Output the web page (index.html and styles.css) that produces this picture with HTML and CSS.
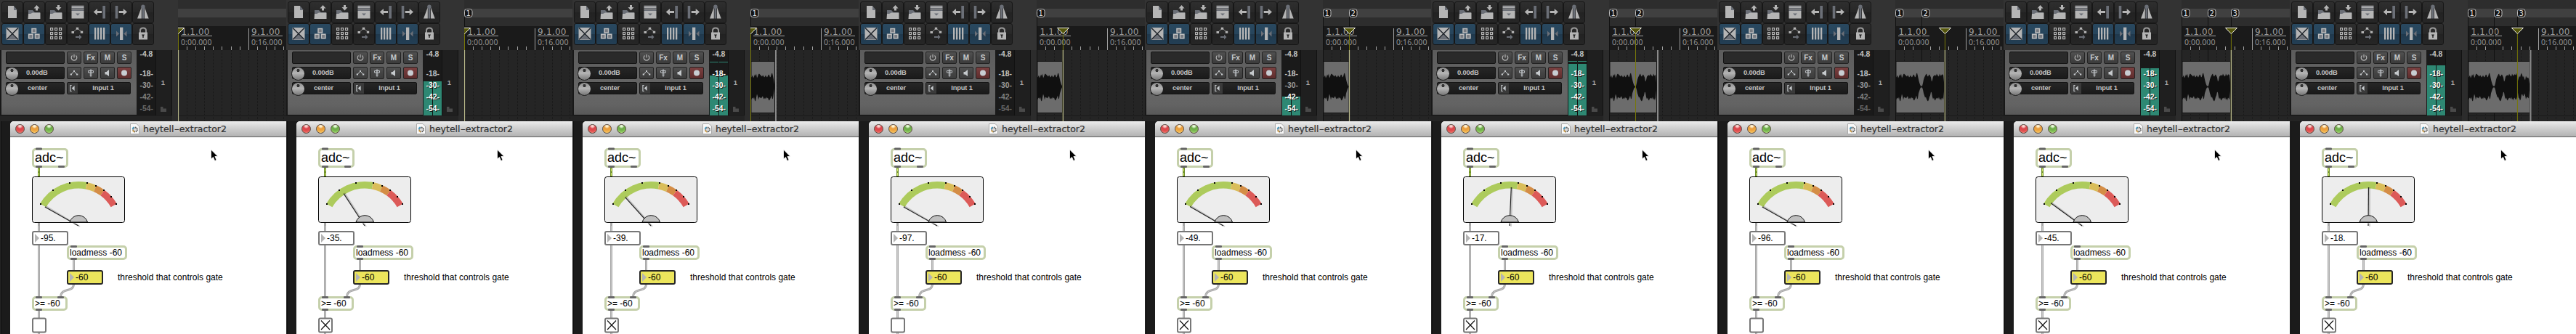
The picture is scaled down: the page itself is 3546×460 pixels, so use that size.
FILE: index.html
```html
<!DOCTYPE html>
<html lang="en">
<head>
<meta charset="utf-8">
<title>heytell-extractor2</title>
<link rel="stylesheet" href="styles.css">
</head>
<body>
<svg class="sprites" aria-hidden="true">
  <symbol id="i-new" viewBox="0 0 30 30"><path class="lt" d="M9 6h8v6h4v11H9z"/><path class="dk" d="M17 6l4.500 5.500V12H17z"/></symbol>
  <symbol id="i-open" viewBox="0 0 30 30"><path class="dk" d="M7 12h6l3 3h7v2H7z"/><path class="lt" d="M7 17h3l3-1.500h10.500V24H6.500z"/><path class="lt" d="M18.500 5l4 4.500h-2.500v3h-3v-3h-2.500z"/></symbol>
  <symbol id="i-save" viewBox="0 0 30 30"><path class="dk" d="M7 12h6l3 3h7v2H7z"/><path class="lt" d="M7 17h3l3-1.500h10.500V24H6.500z"/><path class="lt" d="M18.500 12.500l4-4.500h-2.500V5h-3v3h-2.500z"/></symbol>
  <symbol id="i-list" viewBox="0 0 30 30"><path class="lt" d="M6.500 5.700h17v1.300h-17zM6.500 8h17v1.300h-17zM6.500 10.300h17v1.300h-17zM6.500 13h17v10.500h-17z"/><path class="dk" d="M6.500 7h17v1h-17zM6.500 9.300h17v1h-17zM6.500 11.600h17v1.400h-17zM12 16.500h6l-3 3z"/></symbol>
  <symbol id="i-undo" viewBox="0 0 30 30"><path class="lt" d="M6.700 14.500l5.300-4.500v3h6v3h-6v3z"/><path class="dk" d="M19.300 6H23v17.500h-3.700z"/></symbol>
  <symbol id="i-redo" viewBox="0 0 30 30"><path class="lt" d="M23 14.500L17.700 10v3h-6v3h6v3z"/><path class="dk" d="M6.700 6h3.600v17.500H6.700z"/></symbol>
  <symbol id="i-metro" viewBox="0 0 30 30"><path class="lt" d="M12.800 8v15.500H7zM17 8v15.500h5.700z"/><path class="dk" d="M13.500 9h2.800v14.500h-2.800z"/><circle class="dk" cx="14.900" cy="7.300" r="2.700"/></symbol>
  <symbol id="i-xfade" viewBox="0 0 30 30"><path class="lt" d="M6.500 6h17v17h-17z"/><path class="dk" d="M8 22.500h14l-7-7z"/><path d="M7 6.500l16 16M23 6.500l-16 16" stroke="#20262c" stroke-width="1.500"/></symbol>
  <symbol id="i-group" viewBox="0 0 30 30"><g fill="#777b82" stroke="#bdbdbd" stroke-width="1.500"><path d="M12 7.400h5.500v5.500H12zM7.600 15.200h5.500v5.500H7.600zM16.400 15.200h5.500v5.500h-5.500z"/></g></symbol>
  <symbol id="i-grid" viewBox="0 0 30 30"><g fill="none" stroke="#b5b5b5" stroke-width="1.200"><path d="M7.600 6.600h3v3h-3zM13.600 6.600h3v3h-3zM19.600 6.600h3v3h-3zM7.600 12.600h3v3h-3zM13.600 12.600h3v3h-3zM19.600 12.600h3v3h-3zM7.600 18.600h3v3h-3zM13.600 18.600h3v3h-3zM19.600 18.600h3v3h-3z"/></g></symbol>
  <symbol id="i-env" viewBox="0 0 30 30"><path d="M8.500 12.500l6-5.500 6 5" fill="none" stroke="#888" stroke-width="1"/><path class="lt" d="M6.500 11h3.500v3H6.500zM12.800 5.700h3.400v3h-3.400zM18.800 10.700h3.400v3h-3.400z"/><path class="dk" d="M12 18h5v-2.500l3.500 3.500-3.500 3.500V20h-5z"/></symbol>
  <symbol id="i-bars" viewBox="0 0 30 30"><path class="lt" d="M8 6h2.300v16.500H8zM12 6h2.300v16.500H12zM16 6h2.300v16.500H16zM20 6h2.300v16.500H20z"/></symbol>
  <symbol id="i-snap" viewBox="0 0 30 30"><path class="lt" d="M13 5.700h4.300v17.300H13z"/><path class="dk" d="M8 10.500l4 4-4 4zM22.500 10.500l-4 4 4 4z"/></symbol>
  <symbol id="i-lock" viewBox="0 0 30 30"><path d="M11 13V10q0-3.500 4-3.500t4 3.500v3" fill="none" stroke="#999" stroke-width="2"/><path class="lt" d="M9 12.500h12V22.500H9z"/><path d="M13 15.500h4l-1.300 2.500v2h-1.400v-2z" fill="#222"/></symbol>
  <symbol id="c-power" viewBox="0 0 20 17"><path d="M7.500 5.500a3.800 3.800 0 1 0 5 0M10 4v4.500" fill="none" stroke="#b4b4b4" stroke-width="1.200"/></symbol>
  <symbol id="c-env" viewBox="0 0 20 17"><path d="M6 10.500L10 6l4 4.500" fill="none" stroke="#c5c9cc"/><path d="M4.700 9.500h2.300v2H4.700zM9 5h2v2H9zM13 9.500h2.300v2H13z" fill="#c5c9cc"/></symbol>
  <symbol id="c-pin" viewBox="0 0 20 17"><path d="M6.500 5.500h7v2.500h-7zM9.300 4h1.500v9H9.300z" fill="none" stroke="#b8bcc0" stroke-width="1"/></symbol>
  <symbol id="c-spk" viewBox="0 0 20 17"><path d="M6.500 7H8.500L12 4v9L8.500 10.500H6.500z" fill="#c5c9cc"/></symbol>
  <symbol id="c-rec" viewBox="0 0 20 17"><circle cx="10" cy="8.500" r="4" fill="#c8cdd2"/></symbol>
  <symbol id="c-in" viewBox="0 0 15 17"><path d="M6 4H4v9h2" fill="none" stroke="#c5c9cc" stroke-width="1.300"/><path d="M6 8.500l4.500-4v8z" fill="#c5c9cc"/></symbol>
</svg>

<main class="strip"></main>

<template id="frame">
  <section class="frame">
    <div class="daw">
      <div class="left">
        <div class="toolbar"></div>
        <div class="track">
          <div class="controls">
            <div class="row"><span class="field name"></span><span class="btn"><svg><use href="#c-power"/></svg></span><span class="btn">Fx</span><span class="btn">M</span><span class="btn">S</span></div>
            <div class="row"><span class="field dial"><i></i>0.00dB</span><span class="btn"><svg><use href="#c-env"/></svg></span><span class="btn"><svg><use href="#c-pin"/></svg></span><span class="btn"><svg><use href="#c-spk"/></svg></span><span class="btn rec"><svg><use href="#c-rec"/></svg></span></div>
            <div class="row"><span class="field dial"><i></i>center</span><span class="input"><svg><use href="#c-in"/></svg><b>Input 1</b></span></div>
          </div>
          <div class="vu"></div>
          <div class="number"><span>1</span><svg viewBox="0 0 8 8"><path d="M0 0h3.500v2.500H8V7H0z" fill="#4a4a4a"/></svg></div>
        </div>
      </div>
      <svg class="timeline" viewBox="245 0 149 167"></svg>
    </div>
    <div class="window">
      <header class="titlebar">
        <span class="lights"><i class="red"></i><i class="amber"></i><i class="green"></i></span>
        <svg class="doc" viewBox="0 0 13 15"><path d="M.5.500h8.500l3.500 3.500v10.500H.5z" fill="#f8f8f8" stroke="#aaa"/><circle cx="7" cy="8.500" r="3" fill="#ddd" stroke="#555" stroke-width="1.800" stroke-dasharray="1.500 .8"/><path d="M3.500 8a3.500 3.500 0 0 1 2-3" fill="none" stroke="#4aa0c8" stroke-width="1.600"/><path d="M3.800 9.500l2 2.500" stroke="#d9a03c" stroke-width="1.500"/></svg>
        <h1>heytell<span class="dash">-</span>extractor2</h1>
      </header>
      <div class="patch">
        <svg class="cords" viewBox="14 189 380 271"></svg>
        <div class="node object adc">adc~</div>
        <div class="node number-box reading"><span></span></div>
        <div class="node object loadmess">loadmess -60</div>
        <div class="node number-box threshold"><span>-60</span></div>
        <div class="node comment">threshold that controls gate</div>
        <div class="node object compare">&gt;= -60</div>
        <svg class="ports" viewBox="14 189 380 271"></svg>
      </div>
    </div>
  </section>
</template>
<script src="app.js"></script>
</body>
</html>
```

FILE: styles.css
```css
* { box-sizing: border-box; }
html { overflow: hidden; background: #1b1b1b; }
body { margin: 0; height: 460px; overflow: hidden; }
svg { display: block; }
.sprites { position: absolute; width: 0; height: 0; }
.lt { fill: #b5b5b5; }
.dk { fill: #6b6f77; }

.strip { display: flex; width: 3546px; height: 460px; }
.frame {
  flex: 0 0 394px; height: 460px; overflow: hidden;
  background: linear-gradient(90deg, #252525 0 1px, #101010 1px 2px, #1b1b1b 2px);
  font-family: "Liberation Sans", Arial, sans-serif;
}
.daw { display: flex; height: 167px; background: #222; }
.left { width: 245px; background: #333; }

.toolbar {
  height: 69px; padding: 2px 0 0 2px;
  display: grid; grid-template-columns: repeat(7, 30px); grid-auto-rows: 30px;
  align-content: start;
}
.tool {
  border: 1px solid #171717; border-radius: 3px;
  background: linear-gradient(#2e2e2e, #272727 50%, #222 50%, #262626);
}
.tool.on { background: linear-gradient(#29485f, #27455c 50%, #20394d 50%, #233f55); }
.tool svg { width: 30px; height: 30px; margin: -1px; }

.track { display: flex; height: 98px; padding-left: 1px; background: linear-gradient(90deg, transparent 237px, #2c2c2c 237px), linear-gradient(#181818 90px, #242424 91px); }
.controls {
  width: 187px; height: 90px; padding: 2px 0 0 6px;
  display: flex; flex-direction: column; gap: 4px;
  border-left: 1px solid #181818; border-bottom: 1px solid #181818;
  background: linear-gradient(#5c5c5c, #666 60%, #636363 85%, #585858);
}
.row { display: flex; gap: 3px; height: 17px; }
.field {
  width: 81px; border: 1px solid #141414; border-radius: 2px;
  background: linear-gradient(#262626, #1a1a1a);
  color: #c2c2c2; font-weight: bold; font-size: 9.300px; line-height: 14px;
}
.field.name { background: #2a2a2a; }
.field.dial { display: flex; padding-left: 27px; position: relative; letter-spacing: -.15px; }
.field.dial:has(+ .input) { padding-left: 29px; }
.dial i {
  position: absolute; left: -2px; top: -1px; width: 19px; height: 19px; border-radius: 50%;
  border: 1px solid #202020;
  background: radial-gradient(circle at 8.500px 4px, #333 0 1.800px, transparent 2.300px), linear-gradient(#8c8c8c, #b5b5b5 45%, #777);
}
.btn {
  width: 20px; border: 1px solid #222; border-radius: 2px;
  background: linear-gradient(#515151, #444 50%, #3c3c3c);
  color: #c6cacd; font-weight: bold; font-size: 10px; line-height: 15px; text-align: center;
}
.btn svg { width: 20px; height: 17px; margin: -1px; }
.btn.rec { background: linear-gradient(#7a4040, #6a3434 60%, #5c2c2c); }
.input { display: flex; width: 88px; border: 1px solid #141414; border-radius: 2px; background: linear-gradient(#262626, #1a1a1a); }
.input svg { width: 14px; height: 15px; background: #3a3a3a; }
.input b { flex: 1; color: #c2c2c2; font-size: 9.300px; line-height: 14px; letter-spacing: -.15px; text-align: center; padding-right: 2px; }

.vu {
  position: relative; width: 27px; height: 90px; background: #1a1a1a; overflow: hidden;
  border-right: 1px solid #111;
}
.vu .level { position: absolute; left: 1px; width: 25px; background: linear-gradient(90deg, #2e8873 12px, #111 12px 13px, #2e8873 13px); }
.vu b { position: absolute; left: 4.500px; color: #c4c4c4; font-size: 10.300px; line-height: 10px; }
.vu b.lit { color: #fff; text-shadow: 1px 1px #111; }
.number {
  width: 22px; height: 90px; background: #1f1f1f; color: #a8a8a8;
  font-size: 9.500px; line-height: 11px; font-weight: bold; border-right: 1px solid #121212;
  display: flex; flex-direction: column; justify-content: flex-end; align-items: center; gap: 28px; padding: 0 2px 4px 0;
}
.number svg { width: 8px; height: 8px; }

.timeline { width: 149px; height: 167px; }
.timeline .bar { font: 12px "DejaVu Sans", sans-serif; fill: #9a9a9a; }
.timeline .time { font: 10.500px "Noto Sans", sans-serif; fill: #909090; }
.timeline .mark { font: 10px "DejaVu Sans", sans-serif; fill: #e0e0e0; text-anchor: middle; }

.window { position: relative; margin-left: 14px; height: 293px; background: #fff; border-radius: 5px 0 0 0; }
.titlebar {
  height: 22px; display: flex; align-items: center; padding-left: 7px;
  background: linear-gradient(#ececec, #d2d2d2 40%, #b2b2b2); border-bottom: 1px solid #5f5f5f; border-radius: 5px 0 0 0;
}
.lights { display: flex; gap: 7px; width: 158px; }
.lights i { width: 13px; height: 13px; border-radius: 50%; border: 1px solid #5a4a40; }
.red { background: radial-gradient(circle at 50% 12%, #fbd0cc 0 1.500px, #d8434a 4px, #e2504f 65%, #f59a8c); }
.amber { background: radial-gradient(circle at 50% 12%, #fff0cc 0 1.500px, #e89a3a 4px, #f0ac45 65%, #fde08a); }
.green { background: radial-gradient(circle at 50% 12%, #e2f7d2 0 1.500px, #69a845 4px, #7cbb52 65%, #c2ee92); }
.doc { width: 13px; height: 15px; margin-right: 5px; }
.titlebar h1 { margin: 0; font: 12.500px "DejaVu Sans", sans-serif; color: #333; -webkit-text-stroke: .2px #333; white-space: nowrap; }
.dash { display: inline-block; transform: scaleX(1.6); margin: 0 1.400px; }

.patch { position: relative; height: 271px; overflow: hidden; }
.cords, .ports { position: absolute; left: 0; top: 0; width: 380px; height: 271px; }
.node { position: absolute; font-size: 12px; color: #000; white-space: nowrap; }
.object { border: 3px solid #c5d0ab; border-radius: 5px; background: #fff; line-height: 14px; padding-left: 1px; height: 20px; }
.adc { left: 30px; top: 15px; width: 50px; height: 27px; font-size: 18px; line-height: 20px; }
.loadmess { left: 78px; top: 149px; width: 83px; }
.compare { left: 30px; top: 219px; width: 49px; }
.number-box { width: 50px; height: 20px; border: 2px solid #777; border-radius: 3px; background: #fff; line-height: 16px; display: flex; align-items: center; gap: 2px; padding-left: 2px; }
.number-box::before { content: ""; border: solid transparent; border-width: 6px 0 6px 6px; border-left-color: #b4b4b4; }
.reading { left: 30px; top: 129px; }
.threshold { left: 78px; top: 183px; background: #ece55c; border-color: #262626; }
.comment { left: 148px; top: 186px; line-height: 14px; }
```

FILE: app.js
```js
const TOOLS = ['new', 'open', 'save', 'list', 'undo', 'redo', 'metro',
  'xfade', 'group', 'grid', 'env', 'bars', 'snap', 'lock'];
const ACTIVE = new Set(['xfade', 'group', 'bars', 'snap']);

// level/peak: y of the input meter; clip: right end of the recorded item;
// play: play cursor x; edge: end of the item being recorded; angle: needle.
const FRAMES = [
  { db: '-95.', angle: -60.5, play: 245.5, markers: [], pale: true },
  { db: '-35.', angle: -33, play: 245.5, level: 112, markers: [245.5], pale: true, on: true },
  { db: '-39.', angle: -42, play: 245.5, level: 104, peak: 85, clip: 278.5, edge: 280, markers: [245.5], on: true },
  { db: '-97.', angle: -60.5, play: 281.4, clip: 280.5, markers: [245.5], pale: true },
  { db: '-49.', angle: -60, play: 281.5, level: 133, clip: 281, markers: [245.5, 281.5], pale: true, on: true },
  { db: '-17.', angle: 2.5, play: 281.5, level: 88, peak: 84, clip: 310.5, edge: 312, markers: [245.5, 281.5], on: true },
  { db: '-96.', angle: -60.5, play: 313.4, clip: 312.6, markers: [245.5, 281.5], pale: true },
  { db: '-45.', angle: -54, play: 313.4, level: 94, clip: 312.6, markers: [245.5, 281.5, 313.5], pale: true, on: true },
  { db: '-18.', angle: .5, play: 313.4, level: 90, clip: 330.5, edge: 331.5, markers: [245.5, 281.5, 313.5], on: true },
];

const UP = [13,14,16,12,14,17,15,18,12,14,17,18,17,16,15,14,16,15,13,14,16,14,13,15,17,16,13,14,18,19,15,10,6,3,1,1,1,5,10,13,15,17,18,15,14,16,17,15,13,7,9,14,15,16,16,15,18,16,15,14,18,16,15,17,17,16,19,15,8,12,15,13,17,19,16,13,15,11,9,15,13,12,13,11,11];
const DOWN = [18,16,15,17,14,19,20,15,10,13,18,14,15,15,16,14,13,16,17,15,17,14,16,15,18,19,17,15,12,17,16,9,6,3,1,1,1,4,9,12,15,14,17,19,20,18,14,12,7,8,14,17,15,18,19,16,16,15,17,14,18,16,19,15,16,18,17,14,8,15,16,19,17,11,10,13,12,9,12,17,15,14,15,16,13];

function waveform(end) {
  const n = Math.floor(end - 246);
  let d = 'M246 119';
  for (let i = 0; i < n; i++) d += `L${246 + i} ${119.5 - UP[i]}`;
  d += `L${end} 119`;
  for (let i = n - 1; i >= 0; i--) d += `L${246 + i} ${119.5 + DOWN[i]}`;
  return d + 'Z';
}

function timeline(f) {
  const ticks = [257.5, 269.5, 281.5, 293.5, 305.5, 318.5, 330.5, 354.5, 366.5, 378.5, 390.5];
  let s = `<path d="M245 0h149v167H245z" fill="#252525"/>
    <path d="M245 0h149v36H245z" fill="#2d2d2d"/><path d="M245 12h149v12H245z" fill="#404040"/>
    <path d="M245 36h149v33H245z" fill="#1a1a1a"/>`;
  for (const x of [...ticks, 342.5]) s += `<path d="M${x} 69V167" stroke="#171717" stroke-dasharray="1 1"/>`;
  s += '<path d="M245 159.5h149" stroke="#1b1b1b"/>';
  for (const x of ticks) s += `<path d="M${x} 64v5" stroke="#a0a0a0"/>`;
  s += `<path d="M342.5 39v30M249 49.5h43M346 49.500h43" stroke="#a0a0a0"/>
    <text class="bar" x="249.5" y="48" textLength="39">1.1.00</text>
    <text class="bar" x="346" y="48" textLength="39.5">9.1.00</text>
    <text class="time" x="249" y="62" textLength="42.5">0:00.000</text>
    <text class="time" x="346" y="62" textLength="42.5">0:16.000</text>`;
  for (const x of f.markers) s += `<path d="M${x} 23V167" stroke="#111"/>`;
  if (f.clip) {
    s += `<path d="M246 84.500H${f.clip}V155.500H246z" fill="#6c6c6c" stroke="#141414"/>
      <path d="${waveform(f.clip)}" fill="#101010"/>`;
  }
  f.markers.forEach((x, i) => {
    s += `<rect x="${x}" y="12.500" width="10.500" height="11" rx="3" fill="#141414" stroke="#bdbdbd"/>
      <text class="mark" x="${x + 5.2}" y="21.500">${i + 1}</text>`;
  });
  if (f.edge) s += `<path d="M${f.edge} 69V167" stroke="#8a8a8a" stroke-width="2"/>`;
  s += `<path d="M${f.play} 40V167" stroke="#78780a"/>`;
  if (f.pale) s += `<path d="M${f.play} 69V167" stroke="#b9b98a" stroke-width="1.200"/>`;
  s += `<path d="M${f.play - 8} 38.500h16l-8 8z" fill="#55560c" stroke="#f2f2e6"/>`;
  return s;
}

function levelMeter(f) {
  const labels = [['-4.8', 75], ['-18-', 101.5], ['-30-', 118], ['-42-', 134], ['-54-', 150]];
  let s = f.level ? `<i class="level" style="top:${f.level - 69}px;height:${159 - f.level}px"></i>` : '';
  if (f.peak) s += `<i class="level" style="top:${f.peak - 69}px;height:1px"></i>`;
  const dim = [1, 1, .75, .6, .45];
  labels.forEach(([t, y], i) => {
    const lit = f.level && y + 3 > f.level;
    s += `<b class="${lit ? 'lit' : ''}" style="top:${y - 74}px;opacity:${lit ? 1 : dim[i]}">${t}</b>`;
  });
  return s;
}

const polar = (r, deg) => {
  const a = deg * Math.PI / 180;
  return `${(108 + r * Math.sin(a)).toFixed(2)} ${(311 - r * Math.cos(a)).toFixed(2)}`;
};
const band = (a, b, fill) =>
  `<path d="M${polar(61, a)}A61 61 0 0 1 ${polar(61, b)}L${polar(51.5, b)}A51.500 51.500 0 0 0 ${polar(51.5, a)}Z" fill="${fill}"/>`;

function cords(f) {
  let s = `<g fill="none" stroke="#a8a8a8" stroke-width="3">
      <path d="M53.500 306V440M53.500 457v4M101.500 357V374M101.500 391C101.500 404 84 395 83.500 409"/></g>
    <path d="M53.500 306V440M53.500 457v4M101.500 357V374M101.500 391C101.500 404 84 395 83.500 409" fill="none" stroke="#c8c8c8"/>
    <path d="M53.500 231V243" stroke="#6f8f2c" stroke-width="3"/><path d="M53.500 232V243" stroke="#d4ec6c" stroke-dasharray="4 2"/>
    <rect x="44.500" y="243.500" width="127" height="63" rx="3" fill="#ededed" stroke="#000"/>`;
  s += band(-60, 11, '#adcb5c') + band(11, 24, '#d9bd5a') + band(24, 36, '#d48d46') + band(36, 60, '#dc5a58');
  for (const [x, y] of [[56, 281], [73, 262], [96, 252], [120, 252], [132, 256], [143, 262], [153, 271], [160, 281]])
    s += `<path d="M${x - 1} ${y - 1}h2v2h-2z"/>`;
  s += `<path d="M110 312L${polar(53, f.angle + 1.5)}" stroke="#000" stroke-opacity=".18" stroke-width="2"/>
    <path d="M108 311L${polar(53, f.angle)}" stroke="#222" stroke-width="1.200"/>
    <path d="M96 306a12.700 12.700 0 0 1 24.500 0z" fill="#c0c0c0" stroke="#111"/>
    <path d="M97 307h23" stroke="#fff"/><path d="M94 306.500h29" stroke="#000"/>
    <path d="M53.500 307v4" stroke="#a8a8a8" stroke-width="3"/>
    <rect x="45" y="438.500" width="18" height="19" rx="2" fill="#fff" stroke="#777" stroke-width="2"/>`;
  if (f.on) s += '<path d="M48 441.500l12 12.500M60 441.500l-12 12.500" stroke="#111" stroke-width="1.200"/>';
  return s;
}

const PORTS = [[49, 203.5], [49, 228], [80, 228], [97, 338], [97, 355], [49, 408], [79, 408], [49, 425]]
  .map(([x, y]) => `<rect x="${x}" y="${y}" width="9" height="3" rx="1.200" fill="#666"/>`).join('') +
  '<path d="M290.500 206v13l3-2.600 2.200 5 2.400-1-2.200-4.900h4z" fill="#000" stroke="#fff" stroke-width=".8"/>';

const strip = document.querySelector('.strip');
const tpl = document.getElementById('frame');
for (const f of FRAMES) {
  const el = tpl.content.cloneNode(true);
  const q = sel => el.querySelector(sel);
  q('.toolbar').innerHTML = TOOLS.map(t =>
    `<span class="tool${ACTIVE.has(t) ? ' on' : ''}"><svg><use href="#i-${t}"/></svg></span>`).join('');
  q('.vu').innerHTML = levelMeter(f);
  q('.timeline').innerHTML = timeline(f);
  q('.cords').innerHTML = cords(f);
  q('.ports').innerHTML = PORTS;
  q('.reading span').textContent = f.db;
  strip.append(el);
}
```
